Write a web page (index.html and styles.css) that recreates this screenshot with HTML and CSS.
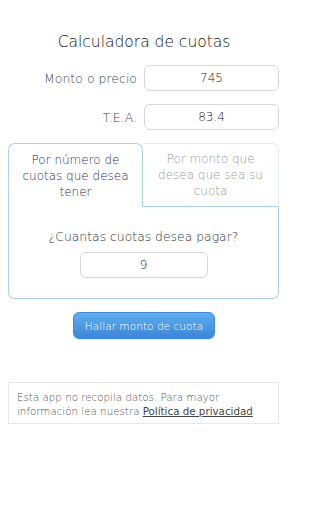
FILE: index.html
```html
<!DOCTYPE html>
<html lang="es">
<head>
<meta charset="utf-8">
<link rel="stylesheet" href="styles.css">
</head>
<body>
<div class="page">
  <h1 class="title">Calculadora de cuotas</h1>
  <div class="row">
    <label class="label">Monto o precio</label>
    <div class="input">745</div>
  </div>
  <div class="row row2">
    <label class="label">T.E.A.</label>
    <div class="input">83.4</div>
  </div>
  <div class="tabs">
    <div class="tabheads">
      <div class="tab active">Por número de cuotas que desea tener</div>
      <div class="tab inactive">Por monto que desea que sea su cuota</div>
    </div>
    <div class="panel">
      <div class="question">¿Cuantas cuotas desea pagar?</div>
      <div class="input small">9</div>
    </div>
  </div>
  <div class="btnwrap"><button class="btn">Hallar monto de cuota</button></div>
  <div class="footer"><p class="ftext">Esta app no recopila datos. Para mayor información lea nuestra <span class="link">Política de privacidad</span></p></div>
</div>
</body>
</html>
```
FILE: styles.css
```css
html, body { margin: 0; padding: 0; background: #fff; }
body { font-family: "DejaVu Sans", sans-serif; font-weight: 200; width: 288px; }
.page { display: flex; flex-direction: column; }
.title { font-weight: 200; font-size: 15.5px; color: #111; text-align: center; margin: 32px 0 0; line-height: 20px; }
.row { display: flex; align-items: center; margin-top: 13px; gap: 7px; }
.row2 { margin-top: 13px; }
.label { width: 137px; text-align: right; font-size: 12.5px; color: #444; }
.input { box-sizing: border-box; width: 135px; height: 26px; border: 1px solid #d6d6d6; border-radius: 6px; display: flex; align-items: center; justify-content: center; font-size: 12px; color: #222; }
.tabs { margin: 13px 9px 0 8px; }
.tabheads { display: flex; height: 64px; }
.tab { box-sizing: border-box; flex: 1; display: flex; align-items: center; justify-content: center; text-align: center; font-size: 12px; line-height: 16px; padding: 0 8px; }
.active { border: 1px solid #a9d3ef; border-bottom: none; border-radius: 7px 7px 0 0; color: #1f2d5c; width: 135px; flex: none; }
.inactive { border: 1px solid #e6ecf0; border-bottom: 1px solid #a9d3ef; border-left: none; border-radius: 0 7px 0 0; color: #999; }
.panel { box-sizing: border-box; height: 92px; border: 1px solid #a9d3ef; border-top: none; border-radius: 0 0 6px 6px; display: flex; flex-direction: column; align-items: center; padding-top: 22px; }
.question { font-size: 12.4px; color: #333; line-height: 16px; }
.input.small { width: 128px; margin-top: 7px; }
.btnwrap { display: flex; justify-content: center; margin-top: 13px; }
.btn { box-sizing: border-box; width: 142px; height: 27px; border: 1px solid #3f8ad8; border-radius: 6px; background: linear-gradient(#5eaef1, #3b86d8); color: #fff; font-family: "DejaVu Sans", sans-serif; font-weight: 200; font-size: 10.6px; }
.footer { box-sizing: border-box; margin: 43px 9px 0 8px; border: 1px solid #e8e8e8; padding: 7px 8px 6px; height: 42px; }
.ftext { margin: 0; max-width: 250px; font-size: 10.3px; line-height: 14px; color: #555; }
.link { text-decoration: underline; color: #444; font-weight: normal; }
```
